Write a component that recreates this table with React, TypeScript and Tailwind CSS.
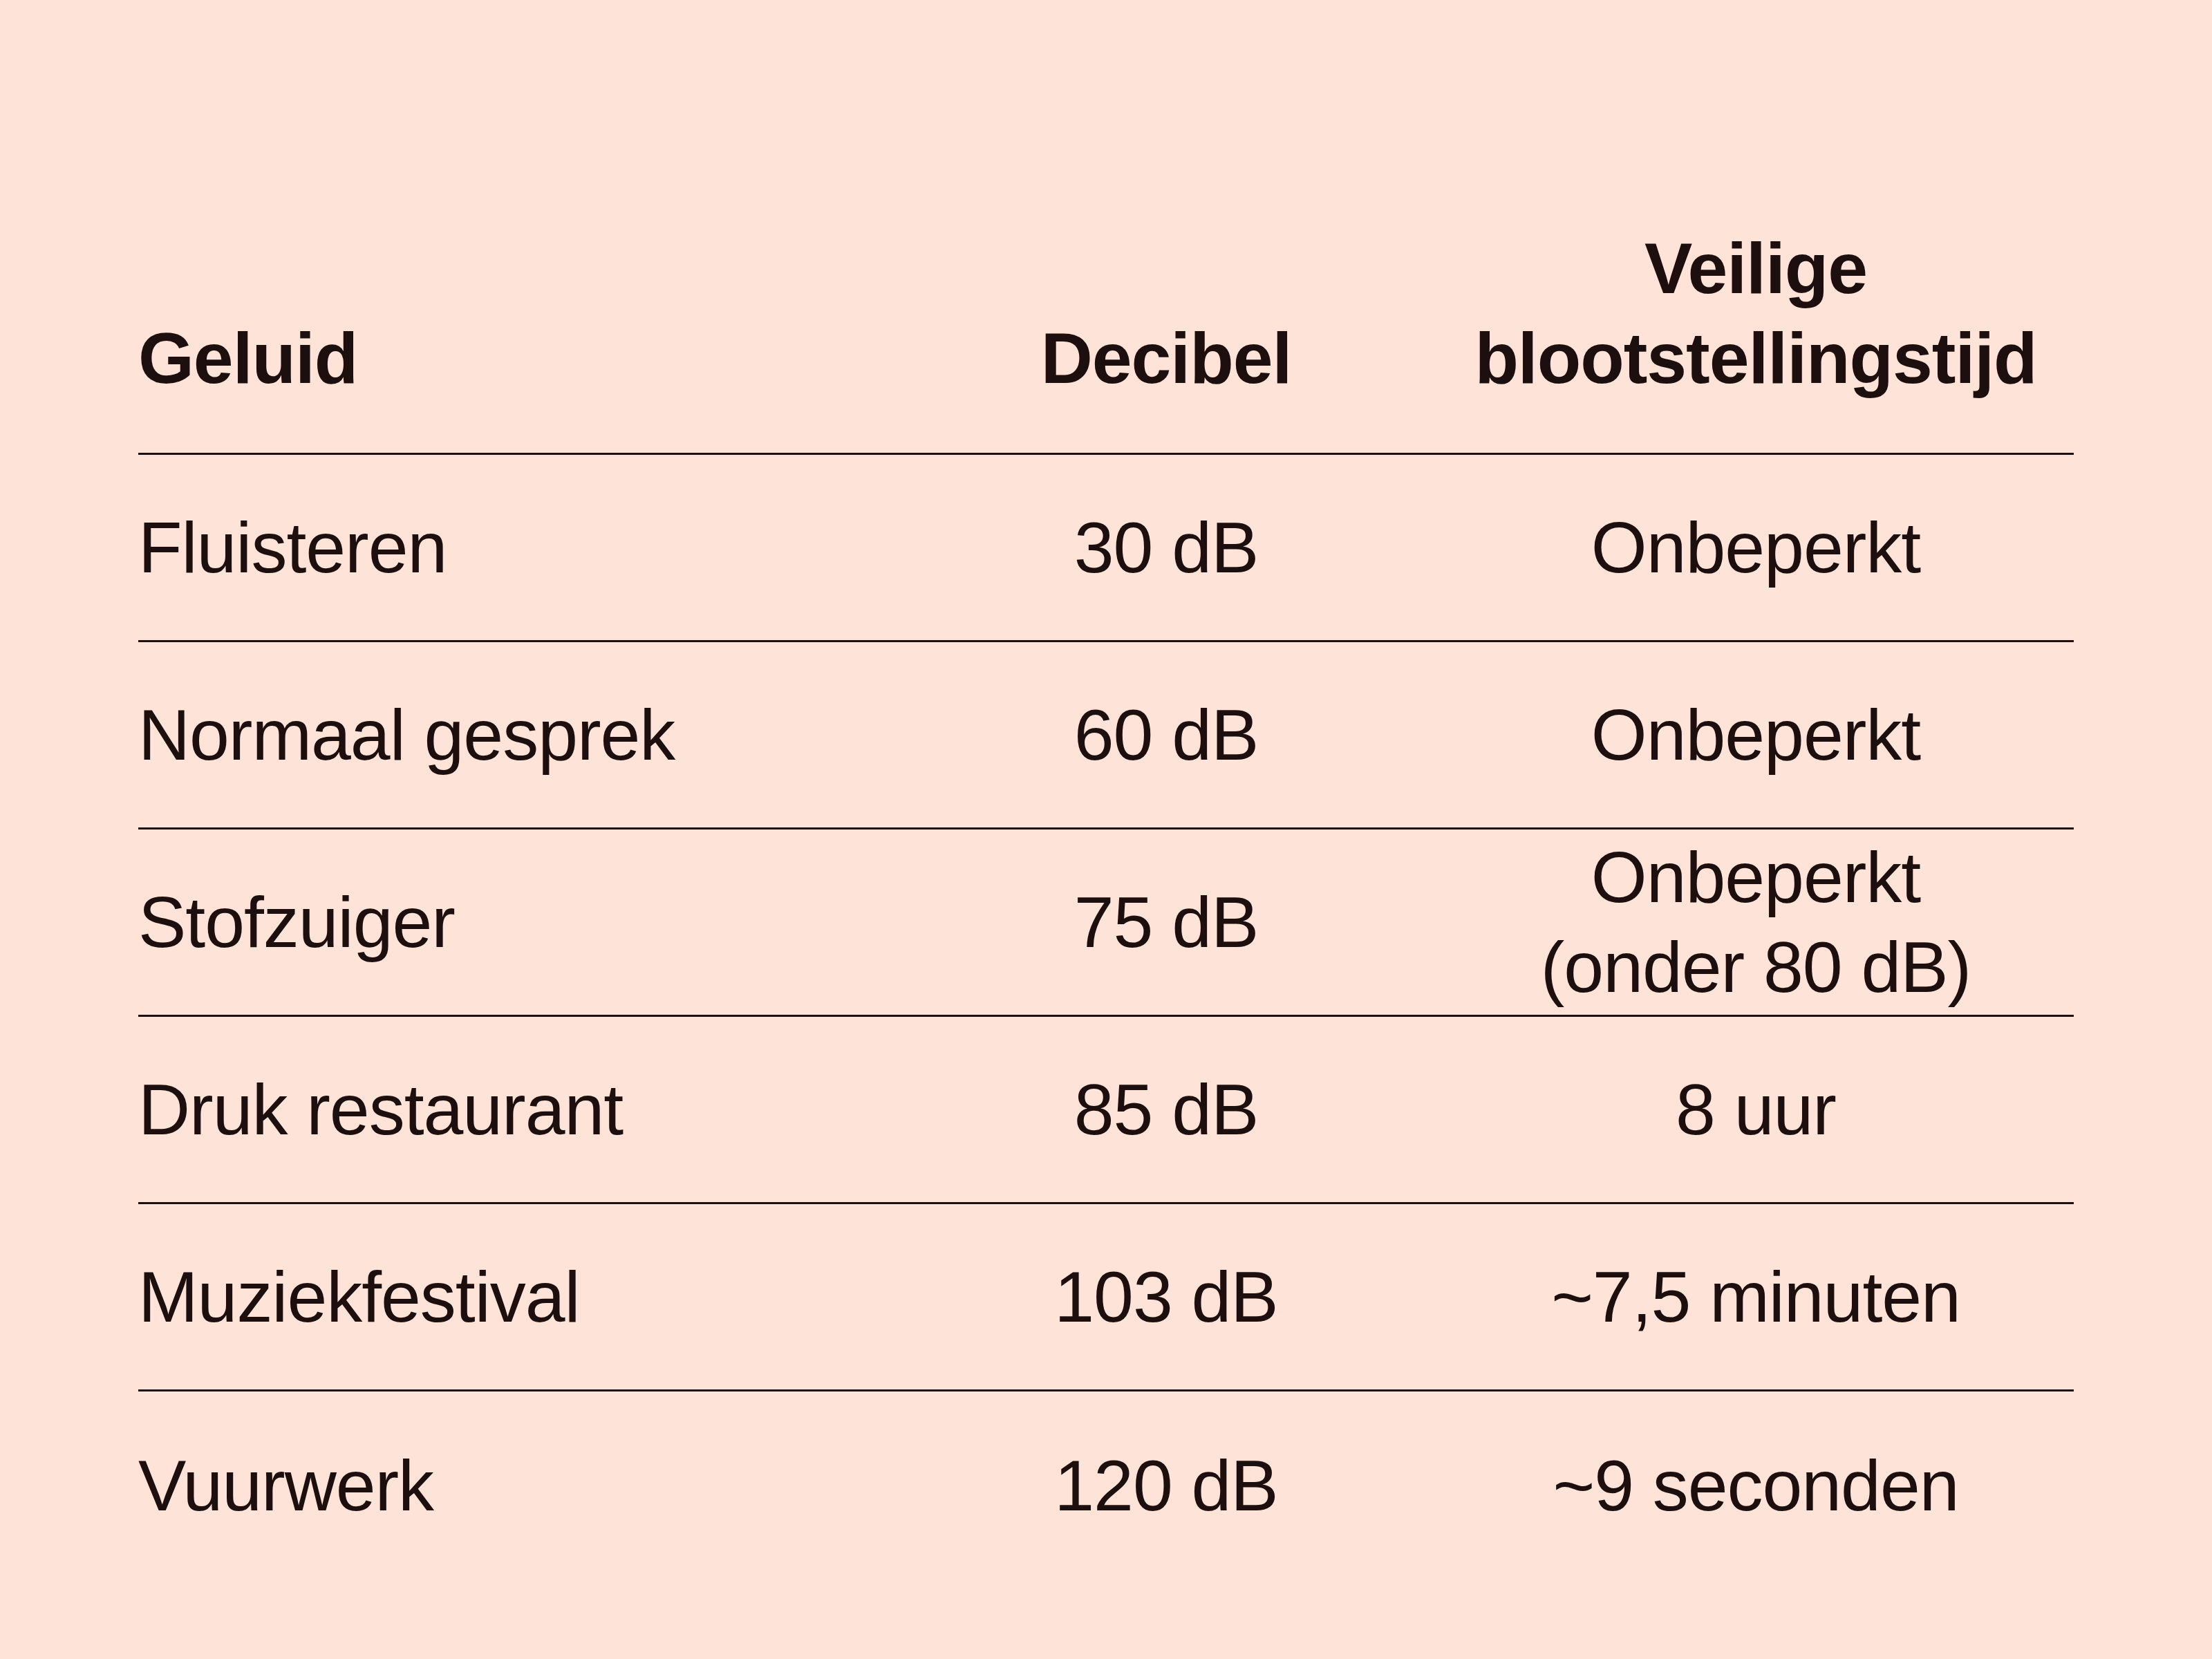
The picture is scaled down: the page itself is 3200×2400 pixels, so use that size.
const ROWS: { sound: string; db: string; time: string[] }[] = [
  { sound: "Fluisteren", db: "30 dB", time: ["Onbeperkt"] },
  { sound: "Normaal gesprek", db: "60 dB", time: ["Onbeperkt"] },
  { sound: "Stofzuiger", db: "75 dB", time: ["Onbeperkt", "(onder 80 dB)"] },
  { sound: "Druk restaurant", db: "85 dB", time: ["8 uur"] },
  { sound: "Muziekfestival", db: "103 dB", time: ["~7,5 minuten"] },
  { sound: "Vuurwerk", db: "120 dB", time: ["~9 seconden"] },
]

export default function App() {
  return (
    <div
      className="min-h-screen w-full bg-[#fde3d8] px-[200px] pt-[323px] text-[#1e0f0f] text-[104px] leading-[1.25] tracking-[-0.01em]"
      style={{ fontFamily: '"Liberation Sans", Arial, sans-serif' }}
    >
      {/* kopregel */}
      <div className="grid grid-cols-[1094px_786px_920px] items-end border-b-[3px] border-[#1e0f0f] pb-[72px] font-bold">
        <div>Geluid</div>
        <div className="text-center">Decibel</div>
        <div className="text-center">Veilige blootstellingstijd</div>
      </div>

      {ROWS.map((r, i) => (
        <div
          key={r.sound}
          className={`grid h-[271px] grid-cols-[1094px_786px_920px] items-center ${i < ROWS.length - 1 ? "border-b-[3px] border-[#1e0f0f]" : ""}`}
        >
          <div>{r.sound}</div>
          <div className="text-center">{r.db}</div>
          <div className="text-center">
            {r.time.map(t => (
              <div key={t}>{t}</div>
            ))}
          </div>
        </div>
      ))}
    </div>
  )
}
